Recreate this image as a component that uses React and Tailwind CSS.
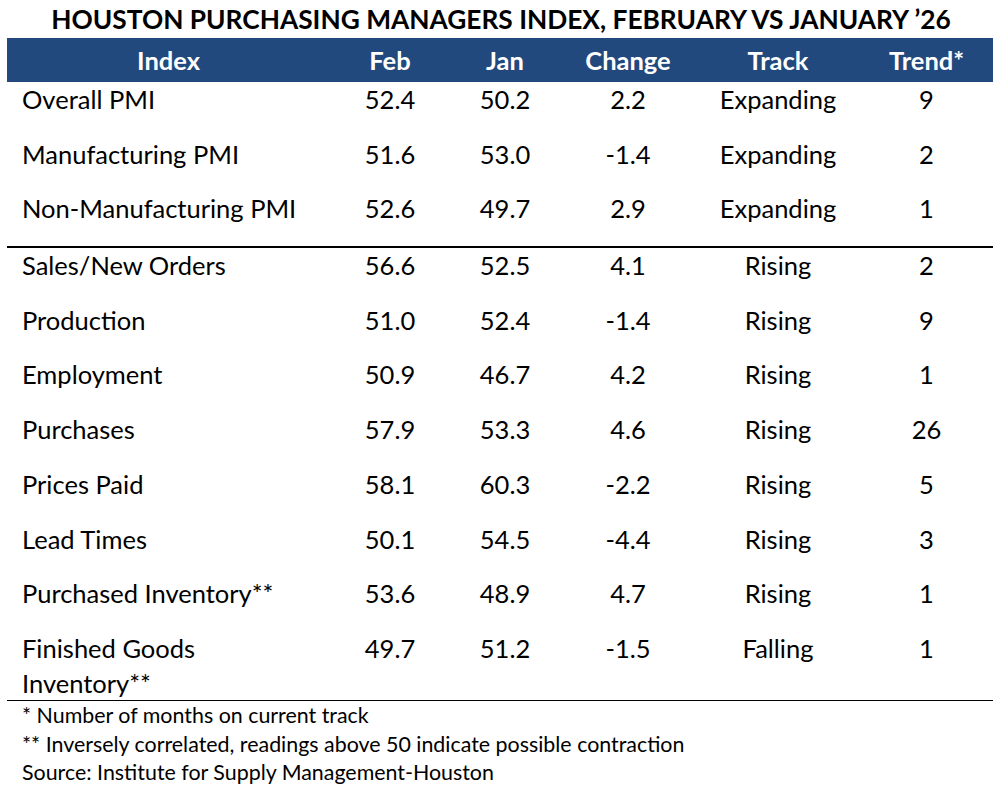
const rowsTop = [
  ["Overall PMI", "52.4", "50.2", "2.2", "Expanding", "9"],
  ["Manufacturing PMI", "51.6", "53.0", "-1.4", "Expanding", "2"],
  ["Non-Manufacturing PMI", "52.6", "49.7", "2.9", "Expanding", "1"],
];

const rowsBottom = [
  ["Sales/New Orders", "56.6", "52.5", "4.1", "Rising", "2"],
  ["Production", "51.0", "52.4", "-1.4", "Rising", "9"],
  ["Employment", "50.9", "46.7", "4.2", "Rising", "1"],
  ["Purchases", "57.9", "53.3", "4.6", "Rising", "26"],
  ["Prices Paid", "58.1", "60.3", "-2.2", "Rising", "5"],
  ["Lead Times", "50.1", "54.5", "-4.4", "Rising", "3"],
  ["Purchased Inventory**", "53.6", "48.9", "4.7", "Rising", "1"],
];

const cols = "grid grid-cols-[323px_120px_110px_136px_164px_133px]";

function Row({ r }) {
  return (
    <div className={`${cols} h-[54.7px] leading-[35px]`}>
      <div className="pl-[15px]">{r[0]}</div>
      {r.slice(1).map((v, i) => (
        <div key={i} className="text-center">
          {v}
        </div>
      ))}
    </div>
  );
}

export default function App() {
  return (
    <div className="w-[1002px] h-[790px] bg-white text-black font-['Lato',sans-serif] overflow-hidden">
      <h1 className="h-[38px] text-center font-bold text-[26.3px] leading-[38px]">
        HOUSTON PURCHASING MANAGERS INDEX, FEBRUARY VS JANUARY ’26
      </h1>
      <div className="mx-[7px] w-[986px]">
        <div className={`${cols} h-[44px] bg-[#21497d] text-white font-bold text-[25.5px] leading-[44px]`}>
          <div className="text-center">Index</div>
          <div className="text-center">Feb</div>
          <div className="text-center">Jan</div>
          <div className="text-center">Change</div>
          <div className="text-center">Track</div>
          <div className="text-center">Trend*</div>
        </div>
        <div className="text-[25.5px]">
          {rowsTop.map((r) => (
            <Row key={r[0]} r={r} />
          ))}
          <div className="h-[2px] bg-black" />
          {rowsBottom.map((r) => (
            <Row key={r[0]} r={r} />
          ))}
          <div className={`${cols} h-[69px] leading-[35px]`}>
            <div className="pl-[15px]">
              <div className="max-w-[200px]">Finished Goods Inventory**</div>
            </div>
            {["49.7", "51.2", "-1.5", "Falling", "1"].map((v, i) => (
              <div key={i} className="text-center">
                {v}
              </div>
            ))}
          </div>
          <div className="h-px bg-black" />
        </div>
        <div className="pl-[15px] text-[21.4px] leading-[28.8px]">
          <p>* Number of months on current track</p>
          <p>** Inversely correlated, readings above 50 indicate possible contraction</p>
          <p>Source: Institute for Supply Management-Houston</p>
        </div>
      </div>
    </div>
  );
}
